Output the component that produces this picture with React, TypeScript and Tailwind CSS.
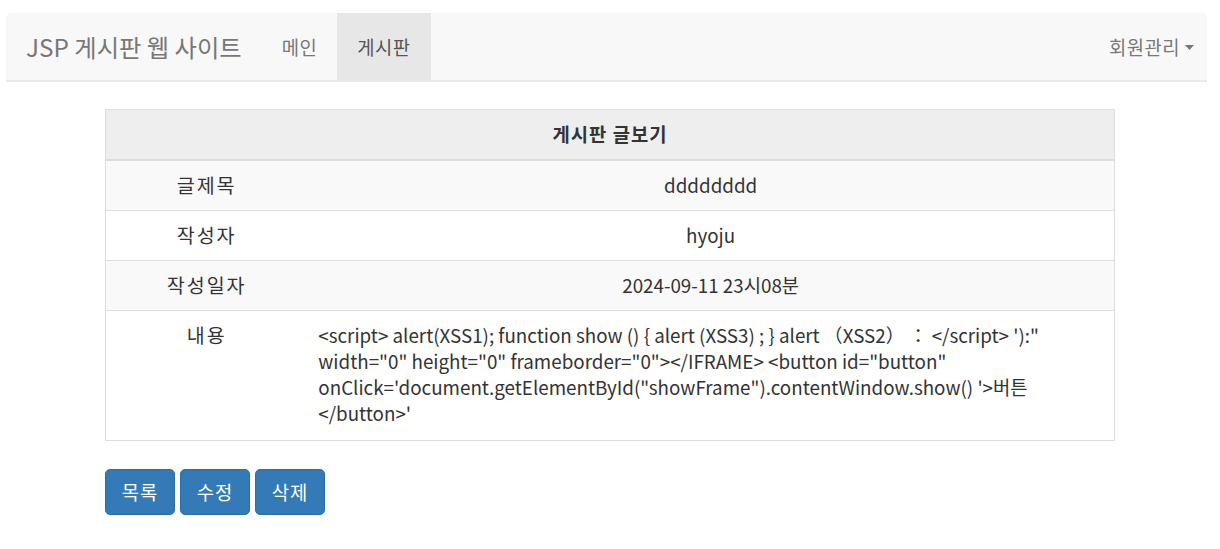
export default function App() {
  const font = { fontFamily: '"Noto Sans CJK KR", "Noto Sans", sans-serif' };
  const label = 'border-t border-[#ddd] px-[11px] py-[11.5px] text-center text-[19.5px] tracking-[2px]';
  const cell = 'border-t border-[#ddd] px-[11px] py-[11.5px] text-center';

  return (
    <div className="min-h-[549px] bg-white pt-[13px] text-[18.8px] leading-[26px] text-[#333]" style={font}>
      {/* navbar */}
      <div className="pl-[6px] pr-[13px]">
        <nav className="flex h-[69px] items-stretch justify-between rounded-t-[5px] border-b-2 border-[#e9e9e9] bg-[#f8f8f8]">
          <div className="flex items-stretch">
            <a className="flex items-center px-[20px] text-[24.3px] text-[#777]">JSP 게시판 웹 사이트</a>
            <ul className="flex items-stretch">
              <li className="flex items-center px-[20px] text-[#777] tracking-[0.5px]">메인</li>
              <li className="flex items-center bg-[#e7e7e7] px-[20px] text-[#555] tracking-[0.5px]">게시판</li>
            </ul>
          </div>
          <div className="flex items-center gap-[5px] pr-[13px] text-[#777] tracking-[0.5px]">
            <span>회원관리</span>
            <svg width="9" height="5" viewBox="0 0 9 5" className="mt-[2px]">
              <path d="M0 0 L9 0 L4.5 5 Z" fill="#777" />
            </svg>
          </div>
        </nav>
      </div>

      {/* board view */}
      <div className="mx-auto mt-[27px] w-[1010px]">
        <table className="w-full border-collapse border border-[#ddd]">
          <thead>
            <tr className="bg-[#eee]">
              <th colSpan={2} className="h-[50px] border-b-2 border-[#ddd] text-center font-bold tracking-[1px]">
                게시판 글보기
              </th>
            </tr>
          </thead>
          <tbody>
            <tr className="bg-[#f9f9f9]">
              <td className={`w-[20%] ${label}`}>글제목</td>
              <td className={cell}>dddddddd</td>
            </tr>
            <tr className="bg-white">
              <td className={label}>작성자</td>
              <td className={cell}>hyoju</td>
            </tr>
            <tr className="bg-[#f9f9f9]">
              <td className={label}>작성일자</td>
              <td className={cell}>2024-09-11 23시08분</td>
            </tr>
            <tr className="bg-white">
              <td className={`${label} align-top`}>내용</td>
              <td className="h-[130px] border-t border-[#ddd] px-[11px] pt-[11.5px] pb-[13px] text-left align-top">
                {`<script> alert(XSS1); function show () { alert (XSS3) ; } alert （XSS2） ： </script> '):" width="0" height="0" frameborder="0"></IFRAME> <button id="button" onClick='document.getElementById("showFrame").contentWindow.show() '>버튼 </button>'`}
              </td>
            </tr>
          </tbody>
        </table>

        <div className="mt-[28px] flex gap-[5px]">
          {['목록', '수정', '삭제'].map((text) => (
            <button
              key={text}
              className="h-[46px] w-[70px] rounded-[5px] border border-[#2e6da4] bg-[#337ab7] text-white tracking-[1px]"
            >
              {text}
            </button>
          ))}
        </div>
      </div>
    </div>
  );
}
